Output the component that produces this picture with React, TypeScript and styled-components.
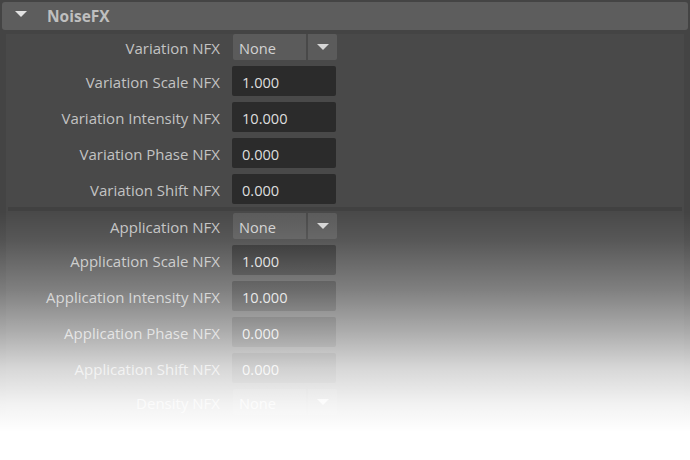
import React from "react";
import styled, { createGlobalStyle } from "styled-components";

const GlobalStyle = createGlobalStyle`
  html, body { margin: 0; padding: 0; background: #444444; }
  body { font-family: "Open Sans", "Noto Sans", sans-serif; }
`;

const Page = styled.div`
  position: relative;
  width: 690px;
  height: 460px;
  overflow: hidden;
  background: #444444;
  padding-top: 2px;
  box-sizing: border-box;
`;

const Header = styled.div`
  height: 28px;
  margin: 0 2px;
  background: #5d5d5d;
  border-radius: 3px;
  display: flex;
  align-items: center;
  gap: 20px;
  padding-left: 13px;
`;

const Caret = styled.span`
  width: 0;
  height: 0;
  border-left: 6.5px solid transparent;
  border-right: 6.5px solid transparent;
  border-top: 6px solid #e2e2e2;
  margin-top: -4px;
`;

const Title = styled.span`
  font-size: 15.5px;
  font-weight: 700;
  color: #bfbfbf;
`;

const Panel = styled.div`
  margin: 4px 6px 0 6px;
  background: #494949;
  display: flex;
  flex-direction: column;
`;

const Group = styled.div`
  display: grid;
  grid-template-columns: 214px 104px;
  column-gap: 12px;
  row-gap: 6px;
  align-items: center;
`;

const Label = styled.div`
  text-align: right;
  font-size: 15px;
  color: #c3c3c3;
  white-space: nowrap;
  padding-top: 1px;
`;

const Field = styled.div`
  height: 30px;
  background: #2b2b2b;
  border-radius: 2px;
  color: #dedede;
  font-size: 14.6px;
  display: flex;
  align-items: center;
  padding: 1px 0 0 10px;
  box-sizing: border-box;
`;

const Select = styled.div`
  height: 26px;
  width: 104px;
  margin-left: 1px;
  display: flex;
  gap: 2px;
`;

const SelectValue = styled.div`
  flex: 1;
  background: #5b5b5b;
  border-radius: 2px 0 0 2px;
  color: #d2d2d2;
  font-size: 14.6px;
  display: flex;
  align-items: center;
  padding: 1px 0 0 6px;
`;

const SelectButton = styled.div`
  width: 29px;
  background: #5b5b5b;
  border-radius: 0 2px 2px 0;
  display: flex;
  align-items: center;
  justify-content: center;
`;

const SelectArrow = styled.span`
  width: 0;
  height: 0;
  border-left: 6.5px solid transparent;
  border-right: 6.5px solid transparent;
  border-top: 6px solid #d6d6d6;
`;

const Separator = styled.div`
  height: 4px;
  margin: 3px 2px 2px 2px;
  background: #414141;
`;

const Fade = styled.div`
  position: absolute;
  left: 0;
  right: 0;
  top: 0;
  bottom: 0;
  pointer-events: none;
  background: linear-gradient(
    to bottom,
    rgba(255, 255, 255, 0) 0px,
    rgba(255, 255, 255, 0) 212px,
    rgba(255, 255, 255, 0.08) 240px,
    rgba(255, 255, 255, 0.3) 290px,
    rgba(255, 255, 255, 0.55) 332px,
    rgba(255, 255, 255, 0.78) 368px,
    rgba(255, 255, 255, 0.93) 404px,
    rgba(255, 255, 255, 1) 432px
  );
`;

type Row = { label: string; kind: "select" | "field"; value: string };

const variation: Row[] = [
  { label: "Variation NFX", kind: "select", value: "None" },
  { label: "Variation Scale NFX", kind: "field", value: "1.000" },
  { label: "Variation Intensity NFX", kind: "field", value: "10.000" },
  { label: "Variation Phase NFX", kind: "field", value: "0.000" },
  { label: "Variation Shift NFX", kind: "field", value: "0.000" },
];

const application: Row[] = [
  { label: "Application NFX", kind: "select", value: "None" },
  { label: "Application Scale NFX", kind: "field", value: "1.000" },
  { label: "Application Intensity NFX", kind: "field", value: "10.000" },
  { label: "Application Phase NFX", kind: "field", value: "0.000" },
  { label: "Application Shift NFX", kind: "field", value: "0.000" },
  { label: "Density NFX", kind: "select", value: "None" },
];

const Rows = ({ rows }: { rows: Row[] }) => (
  <Group>
    {rows.map((r) => (
      <React.Fragment key={r.label}>
        <Label>{r.label}</Label>
        {r.kind === "select" ? (
          <Select>
            <SelectValue>{r.value}</SelectValue>
            <SelectButton>
              <SelectArrow />
            </SelectButton>
          </Select>
        ) : (
          <Field>{r.value}</Field>
        )}
      </React.Fragment>
    ))}
  </Group>
);

export default function App() {
  return (
    <>
      <GlobalStyle />
      <Page>
        <Header>
          <Caret />
          <Title>NoiseFX</Title>
        </Header>
        <Panel>
          <Rows rows={variation} />
          <Separator />
          <Rows rows={application} />
        </Panel>
        <Fade />
      </Page>
    </>
  );
}
